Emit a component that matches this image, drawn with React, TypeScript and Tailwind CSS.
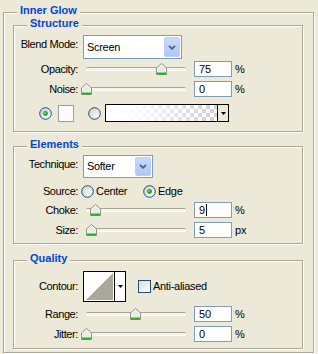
import React from "react";

const GroupBox = ({
  title,
  className,
  children,
}: {
  title: string;
  className: string;
  children?: React.ReactNode;
}) => (
  <div className={`relative border border-[#ACA899] shadow-[inset_1px_1px_0_#fff,1px_1px_0_#fff] ${className}`}>
    <span className="absolute left-[13px] top-[-9px] bg-[#ECE9D8] px-[3px] text-[11px] font-bold leading-[13px] text-[#0046D5]">
      {title}
    </span>
    {children}
  </div>
);

const Label = ({ text, className = "" }: { text: string; className?: string }) => (
  <span className={`w-[64px] shrink-0 text-right text-[11px] leading-[13px] tracking-[-0.4px] ${className}`}>{text}</span>
);

const Select = ({ value, width, height }: { value: string; width: string; height: string }) => (
  <div className={`ml-[5px] flex border border-[#7F9DB9] bg-white ${width} ${height}`}>
    <span className="flex-1 self-center pl-[3px] text-[11px] leading-[13px] tracking-[-0.3px]">{value}</span>
    <div className="m-px flex w-[16px] items-center justify-center rounded-[2px] border border-[#BCCFF9] bg-linear-to-b from-[#C9D8FD] to-[#B2C6F6]">
      <svg width="8" height="5" viewBox="0 0 8 5">
        <path d="M1 0.8 L4 3.8 L7 0.8" fill="none" stroke="#4D6185" strokeWidth="1.8" />
      </svg>
    </div>
  </div>
);

const Thumb = () => (
  <svg width="11" height="12" viewBox="0 0 11 12">
    <path d="M5.5 0.5 L10.5 5 L10.5 11.5 L0.5 11.5 L0.5 5 Z" fill="#F7F7F4" stroke="#8C9488" />
    <path d="M2 5.5 L5.5 2.3 L9 5.5 L9 9 L2 9 Z" fill="#ECEAE2" />
    <rect x="1" y="9.5" width="9" height="2" fill="#21B021" />
  </svg>
);

const Slider = ({ value }: { value: number }) => (
  <div className="relative ml-[3px] h-[16px] w-[110px] shrink-0">
    <div className="absolute left-[5px] top-[6px] h-[3px] w-[100px] rounded-[2px] border-t border-[#A7A596] bg-[#F3F2EC] shadow-[0_1px_0_#fff]" />
    <div className="absolute top-[2px]" style={{ left: value }}>
      <Thumb />
    </div>
  </div>
);

const NumberBox = ({ value, cursor = false }: { value: string; cursor?: boolean }) => (
  <div className="ml-[3px] flex h-[16px] w-[38px] shrink-0 items-center border border-[#7F9DB9] bg-white pl-[4px] text-[11px] leading-[13px]">
    <span>{value}</span>
    {cursor && <span className="ml-px inline-block h-[12px] w-px bg-black" />}
  </div>
);

const Radio = ({ checked = false }: { checked?: boolean }) => (
  <svg width="13" height="13" viewBox="0 0 13 13" className="shrink-0">
    <defs>
      <radialGradient id={checked ? "rg1" : "rg0"} cx="70%" cy="70%" r="70%">
        <stop offset="0%" stopColor="#FFFFFF" />
        <stop offset="100%" stopColor="#D6D5CC" />
      </radialGradient>
    </defs>
    <circle cx="6.5" cy="6.5" r="5.8" fill={`url(#${checked ? "rg1" : "rg0"})`} stroke="#1C5180" strokeWidth="1" />
    {checked && (
      <>
        <circle cx="6.5" cy="6.5" r="2.4" fill="#21A121" />
        <circle cx="6" cy="6" r="0.9" fill="#7DDB7D" />
      </>
    )}
  </svg>
);

const SliderRow = ({
  label,
  value,
  pos,
  unit,
  mt,
  cursor = false,
}: {
  label: string;
  value: string;
  pos: number;
  unit: string;
  mt: string;
  cursor?: boolean;
}) => (
  <div className={`flex h-[16px] items-center ${mt}`}>
    <Label text={label} />
    <Slider value={pos} />
    <NumberBox value={value} cursor={cursor} />
    <span className="ml-[3px] text-[11px] leading-[13px]">{unit}</span>
  </div>
);

export default function App() {
  return (
    <div className="h-[354px] w-[318px] overflow-hidden bg-[#ECE9D8] pt-[12px] font-['Liberation_Sans',Arial,sans-serif] text-black">
      <GroupBox title="Inner Glow" className="ml-[3px] h-[341px] w-[311px] pl-[9px] pt-[12px]">
        <GroupBox title="Structure" className="flex h-[107px] w-[290px] flex-col">
          <div className="mt-[9px] flex h-[24px] items-start">
            <Label text="Blend Mode:" className="pt-[3px]" />
            <Select value="Screen" width="w-[99px]" height="h-[24px]" />
          </div>
          <SliderRow label="Opacity:" value="75" pos={75} unit="%" mt="mt-[2px]" />
          <SliderRow label="Noise:" value="0" pos={0} unit="%" mt="mt-[4px]" />
          <div className="mt-[7px] flex h-[18px] items-center pl-[25px]">
            <Radio checked />
            <div className="ml-[6px] h-[17px] w-[16px] border border-[#9D9D9D] bg-[#FCFCFC]" />
            <div className="ml-[14px]">
              <Radio />
            </div>
            <div className="ml-[4px] flex h-[18px] w-[124px] border border-black shadow-[inset_1px_1px_0_#000]">
              <div className="flex-1 [background-image:linear-gradient(to_right,#fff_0%,rgba(255,255,255,0.9)_30%,rgba(255,255,255,0)_100%),repeating-conic-gradient(#CFCFCF_0_25%,#fff_0_50%)] [background-size:100%_100%,8px_8px]" />
              <div className="flex w-[11px] items-center justify-center border-l border-black bg-[#ECE9D8]">
                <svg width="5" height="3" viewBox="0 0 5 3">
                  <path d="M0 0 H5 L2.5 3 Z" fill="#000" />
                </svg>
              </div>
            </div>
          </div>
        </GroupBox>

        <GroupBox title="Elements" className="mt-[14px] flex h-[98px] w-[290px] flex-col">
          <div className="mt-[8px] flex h-[23px] items-start">
            <Label text="Technique:" className="pt-[3px]" />
            <Select value="Softer" width="w-[70px]" height="h-[23px]" />
          </div>
          <div className="mt-[7px] flex h-[13px] items-center">
            <Label text="Source:" />
            <div className="ml-[3px] flex items-center">
              <Radio />
              <span className="ml-[2px] w-[47px] text-[11px] leading-[13px] tracking-[-0.3px]">Center</span>
              <Radio checked />
              <span className="ml-[2px] text-[11px] leading-[13px] tracking-[-0.3px]">Edge</span>
            </div>
          </div>
          <SliderRow label="Choke:" value="9" pos={9} unit="%" mt="mt-[4px]" cursor />
          <SliderRow label="Size:" value="5" pos={5} unit="px" mt="mt-[4px]" />
        </GroupBox>

        <GroupBox title="Quality" className="mt-[16px] flex h-[89px] w-[290px] flex-col">
          <div className="mt-[10px] flex h-[31px] items-center">
            <Label text="Contour:" />
            <div className="ml-[5px] flex h-[31px] w-[43px] border border-black bg-white shadow-[inset_1px_1px_0_#000]">
              <svg width="30" height="29" viewBox="0 0 30 29" className="shrink-0">
                <rect width="30" height="29" fill="#fff" />
                <path d="M2 28 L29 1 L29 28 Z" fill="#ACA899" />
              </svg>
              <div className="flex flex-1 items-center justify-center border-l border-black bg-white">
                <svg width="5" height="3" viewBox="0 0 5 3">
                  <path d="M0 0 H5 L2.5 3 Z" fill="#000" />
                </svg>
              </div>
            </div>
            <div className="ml-[12px] h-[13px] w-[13px] border border-[#1C5180] bg-linear-to-br from-[#DCDBD4] to-white" />
            <span className="ml-[2px] text-[11px] leading-[13px] tracking-[-0.3px]">Anti-aliased</span>
          </div>
          <SliderRow label="Range:" value="50" pos={49} unit="%" mt="mt-[4px]" />
          <SliderRow label="Jitter:" value="0" pos={0} unit="%" mt="mt-[4px]" />
        </GroupBox>
      </GroupBox>
    </div>
  );
}
